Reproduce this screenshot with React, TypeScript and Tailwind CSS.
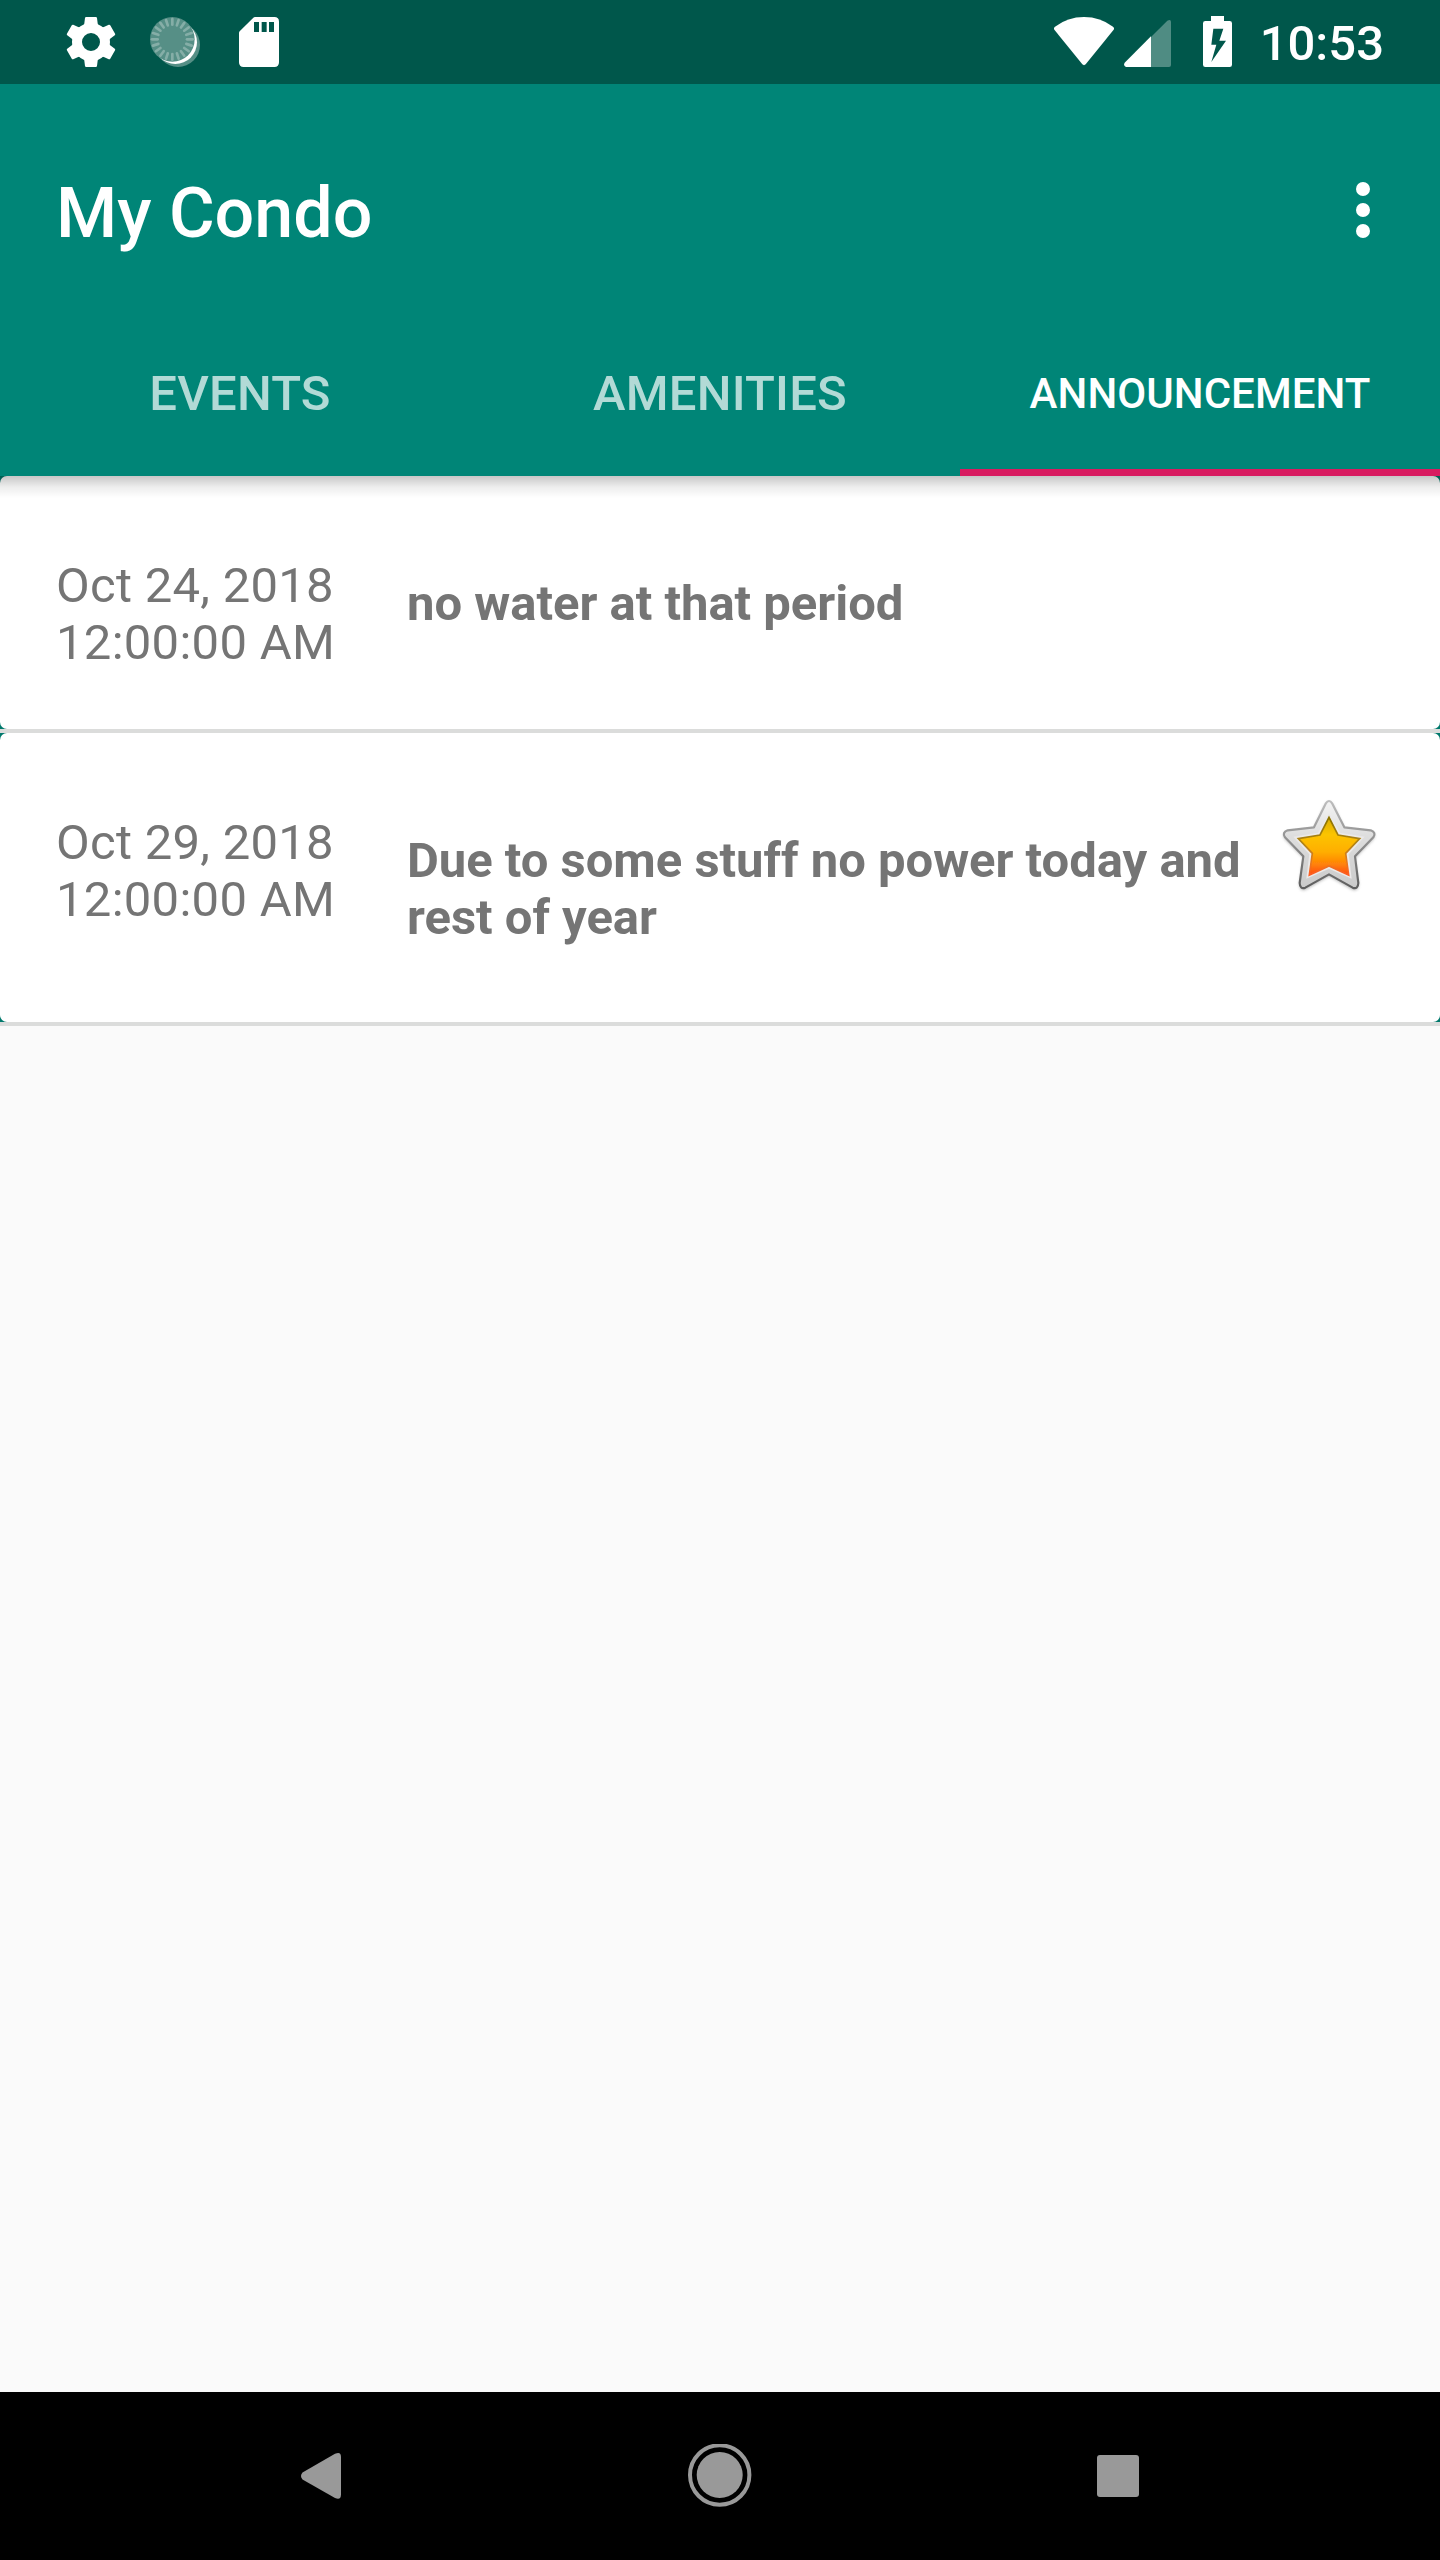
import type { ReactNode } from "react";

const TEETH = [0, 60, 120, 180, 240, 300];
const TICKS = Array.from({ length: 20 }, (_, i) => i * 18);

function GearIcon() {
  return (
    <svg className="h-[84px] w-[50px]" viewBox="78 0 150 252" overflow="visible">
      <g transform="translate(153 126)" fill="#fff">
        <circle r="42" fill="none" stroke="#fff" strokeWidth="30" />
        {TEETH.map((a) => (
          <path
            key={a}
            transform={`rotate(${a})`}
            d="M-22-48L-20-56L-18-72Q-17.500-75-14.500-75H14.500Q17.500-75 18-72L20-56L22-48Z"
          />
        ))}
      </g>
    </svg>
  );
}

function SyncDotIcon() {
  return (
    <svg className="ml-[34px] h-[84px] w-[50px]" viewBox="330 0 150 252">
      <circle cx="414" cy="135" r="66" fill="#568f86" />
      <circle cx="406" cy="127" r="65" fill="#fff" />
      <circle cx="397" cy="118" r="67" fill="#568f86" />
      {TICKS.map((a) => (
        <path
          key={a}
          transform={`translate(397 118) rotate(${a})`}
          d="M0-44V-61"
          stroke="#85aea7"
          strokeWidth="8"
          strokeLinecap="round"
        />
      ))}
    </svg>
  );
}

function SdCardIcon() {
  return (
    <svg className="ml-[39px] h-[84px] w-[40px]" viewBox="597 0 120 252">
      <path
        fill="#fff"
        fillRule="evenodd"
        d="M645 51H703Q717 51 717 65V187Q717 201 703 201H611Q597 201 597 187V99Q597 96 599 94L640 53Q642 51 645 51ZM642 66V96H657V66ZM665 66V96H680V66ZM687 66V96H702V66Z"
      />
    </svg>
  );
}

function StatusBar() {
  return (
    <div className="flex h-[84px] items-center bg-[#00574b] pl-[66px] pr-[56px]">
      <GearIcon />
      <SyncDotIcon />
      <SdCardIcon />
      <svg className="ml-auto h-[84px] w-[60px]" viewBox="72 0 180 252">
        <path
          fill="#fff"
          d="M75 80Q113 51 162 51Q211 51 249 80Q254 84 251 89L167 193Q162 198 157 193L73 89Q70 84 75 80Z"
        />
      </svg>
      <svg className="ml-[10px] h-[84px] w-[47px]" viewBox="282 0 141 252">
        <path fill="#4f8c83" d="M363 111L412 62Q423 56 423 66V195Q423 201 417 201H363Z" />
        <path fill="#fff" d="M363 109V201H288Q279 198 284 188Z" />
      </svg>
      <svg className="ml-[32px] h-[84px] w-[29px]" viewBox="519 0 87 252">
        <path
          fill="#fff"
          fillRule="evenodd"
          d="M543 48H582V63H599Q606 63 606 70V194Q606 201 599 201H526Q519 201 519 194V70Q519 63 526 63H543ZM550 86L544 134H559L544 186L588 122H568L580 86Z"
        />
      </svg>
      <span className="ml-[28px] pt-[4px] text-[49px] font-medium leading-[80px]">10:53</span>
    </div>
  );
}

function Star() {
  return (
    <svg className="h-[96px] w-[100px]" viewBox="120 294 300 288">
      <defs>
        <linearGradient id="rim" x1="0" y1="0" x2="0" y2="1">
          <stop offset="0" stopColor="#bdbdbd" />
          <stop offset=".35" stopColor="#999" />
          <stop offset="1" stopColor="#5e5e5e" />
        </linearGradient>
        <linearGradient id="silver" x1="0" y1="0" x2="0" y2="1">
          <stop offset="0" stopColor="#f4f4f4" />
          <stop offset=".4" stopColor="#dedede" />
          <stop offset="1" stopColor="#cacaca" />
        </linearGradient>
        <linearGradient id="gold" x1="0" y1="0" x2="0" y2="1">
          <stop offset="0" stopColor="#d8ac00" />
          <stop offset=".3" stopColor="#fcc400" />
          <stop offset=".6" stopColor="#ffae00" />
          <stop offset=".82" stopColor="#ff8008" />
          <stop offset="1" stopColor="#ff4a10" />
        </linearGradient>
        <linearGradient id="goldEdge" x1="0" y1="0" x2="0" y2="1">
          <stop offset="0" stopColor="#8a7200" />
          <stop offset=".45" stopColor="#b08418" />
          <stop offset=".8" stopColor="#e87820" />
          <stop offset="1" stopColor="#ff5a20" />
        </linearGradient>
        <filter id="soft" x="-20%" y="-20%" width="140%" height="140%">
          <feGaussianBlur stdDeviation="2.2" />
        </filter>
        <filter id="shade" x="-20%" y="-20%" width="140%" height="140%">
          <feGaussianBlur stdDeviation="4" />
        </filter>
      </defs>
      <path
        d="M255 312Q267 294 279 312L314 383L394 392Q412 400 399 416L346 471L356 550Q355 573 337 566L267 526L197 566Q179 573 178 550L190 471L136 416Q123 400 141 392L221 383Z"
        fill="#888"
        opacity=".6"
        transform="translate(0 3)"
        filter="url(#shade)"
      />
      <path
        d="M257 311Q267 295 277 311L313 382L392 391Q410 398 400 412L345 469L355 549Q354 569 338 563L267 523L196 563Q180 569 179 549L190 469L135 412Q125 398 143 391L222 382Z"
        fill="url(#silver)"
        stroke="url(#rim)"
        strokeWidth="6.500"
        strokeLinejoin="round"
        filter="url(#soft)"
      />
      <path
        d="M267 338L300 398L374 410L326 463L335 536L267 506L199 536L208 463L160 410L234 398Z"
        fill="#ebe9e9"
        filter="url(#soft)"
      />
      <path
        d="M267 352L294 405L359 416L317 460L326 525L267 498L208 525L217 460L175 416L240 405Z"
        fill="url(#gold)"
        stroke="url(#goldEdge)"
        strokeWidth="5"
        filter="url(#soft)"
      />
    </svg>
  );
}

function Tab({ children, className }: { children: ReactNode; className: string }) {
  return (
    <div className={`flex h-[168px] flex-1 items-center justify-center border-b-[7px] font-medium ${className}`}>
      {children}
    </div>
  );
}

function Announcement({
  date,
  time,
  title,
  starred,
  className,
}: {
  date: string;
  time: string;
  title: string;
  starred?: boolean;
  className: string;
}) {
  return (
    <div className="border-b-4 border-[#dbdcdb] bg-[#00796c]">
      <div className={`flex items-start rounded-[7px] bg-white px-[56px] text-[49px] leading-[57px] text-[#757575] ${className}`}>
        <div className="mt-[81px] w-[351px] shrink-0 tracking-[0.28px]">
          <div>{date}</div>
          <div>{time}</div>
        </div>
        <div className="mt-[99px] w-[850px] shrink-0 font-bold tracking-[-0.02px]">{title}</div>
        {starred && (
          <div className="ml-[23px] mt-[65px] shrink-0">
            <Star />
          </div>
        )}
      </div>
    </div>
  );
}

export default function App() {
  return (
    <div className="flex h-[2560px] w-[1440px] flex-col overflow-hidden bg-[#fafafa] font-[Roboto,sans-serif] text-white">
      <StatusBar />
      <header className="bg-[#008577]">
        <div className="flex h-[224px] items-center justify-between pl-[56px] pr-[70px]">
          <h1 className="pt-[34px] text-[70px] font-medium leading-[82px]">My Condo</h1>
          <div className="flex flex-col gap-[7px] pt-[28px]">
            <span className="size-[14px] rounded-full bg-white" />
            <span className="size-[14px] rounded-full bg-white" />
            <span className="size-[14px] rounded-full bg-white" />
          </div>
        </div>
        <nav className="flex">
          <Tab className="border-transparent pt-[11px] text-[49px] tracking-[0.2px] text-[#b2dad6]">EVENTS</Tab>
          <Tab className="border-transparent pt-[11px] text-[49px] tracking-[0.2px] text-[#b2dad6]">AMENITIES</Tab>
          <Tab className="border-[#d81b60] pt-[9px] text-[42px] tracking-[0.06px]">ANNOUNCEMENT</Tab>
        </nav>
      </header>
      <main className="relative flex-1">
        <Announcement className="h-[253px]" date="Oct 24, 2018" time="12:00:00 AM" title="no water at that period" />
        <Announcement
          className="h-[289px]"
          date="Oct 29, 2018"
          time="12:00:00 AM"
          title="Due to some stuff no power today and rest of year"
          starred
        />
        <div className="absolute inset-x-0 top-0 h-[22px] bg-linear-to-b from-black/22 via-black/7 to-transparent" />
      </main>
      <footer className="flex h-[168px] items-center bg-black pl-[300px]">
        <svg className="h-[48px] w-[42px]" viewBox="0 0 42 48">
          <path fill="#999" d="M2.500 20.500L35 1.800Q41 -1 41 5V42.500Q41 48.500 35 46L2.500 27.500Q-.5 24 2.500 20.500Z" />
        </svg>
        <svg className="ml-[346px] h-[64px] w-[64px]" viewBox="0 0 64 64">
          <circle cx="31.700" cy="31" r="29.700" fill="none" stroke="#999" strokeWidth="4" />
          <circle cx="31.700" cy="31" r="23" fill="#999" />
        </svg>
        <span className="ml-[345px] size-[42px] rounded-[3px] bg-[#999]" />
      </footer>
    </div>
  );
}
